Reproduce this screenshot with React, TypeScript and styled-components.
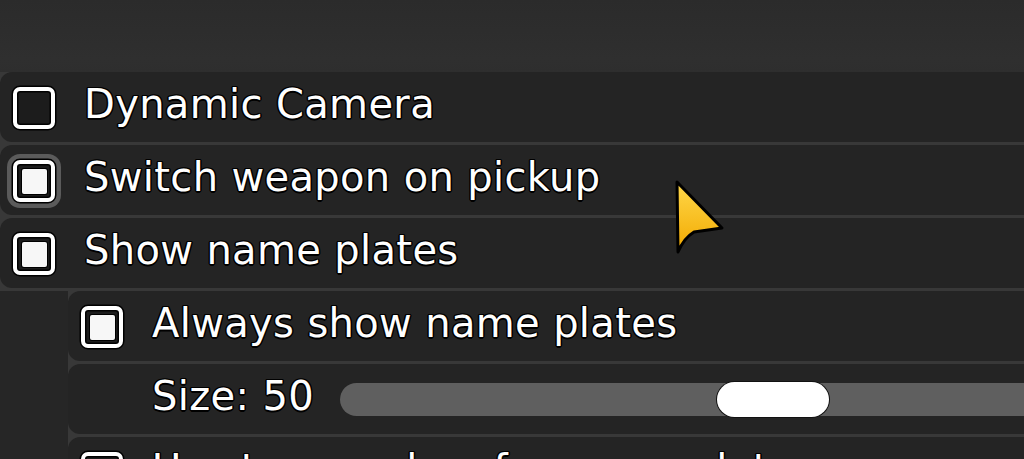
import React from "react";
import styled, { createGlobalStyle } from "styled-components";

const Global = createGlobalStyle`
  html, body {
    margin: 0;
    padding: 0;
    background: #2d2d2d;
    width: 1024px;
    height: 459px;
    overflow: hidden;
  }
  #root {
    width: 1024px;
    height: 459px;
    overflow: hidden;
    position: relative;
  }
`;

const Screen = styled.div`
  position: relative;
  width: 1024px;
  height: 459px;
  overflow: hidden;
  background: linear-gradient(180deg, #2b2b2b 0px, #2f2f2f 60px, #2e2e2e 72px);
  font-family: "DejaVu Sans", "Liberation Sans", sans-serif;
`;

const List = styled.div`
  margin-top: 72px;
  margin-right: -40px;
  display: flex;
  flex-direction: column;
  gap: 3px;
  background: #383838;
`;

const Row = styled.div`
  height: 70px;
  display: flex;
  align-items: center;
  background: #242424;
  border-radius: 12px 0 0 12px;
  padding-left: 13px;
  box-sizing: border-box;
`;

const Nested = styled.div`
  display: grid;
  grid-template-columns: 68px 1fr;
`;

const Gutter = styled.div`
  background: #262626;
`;

const NestedRows = styled.div`
  display: flex;
  flex-direction: column;
  gap: 3px;
`;

const Box = styled.span<{ $checked?: boolean; $focus?: boolean }>`
  position: relative;
  flex: none;
  width: 42px;
  height: 42px;
  box-sizing: border-box;
  border: 4px solid #ffffff;
  border-radius: 7px;
  background: #1c1c1c;
  box-shadow: 0 0 0 1.5px #000, inset 0 0 0 1.5px #000
    ${(p) => (p.$focus ? ", 0 0 0 6px rgba(110,110,110,0.75)" : "")};
  display: flex;
  align-items: center;
  justify-content: center;
  margin-top: 2px;

  &::after {
    content: "";
    display: ${(p) => (p.$checked ? "block" : "none")};
    width: 25px;
    height: 25px;
    background: #f7f7f7;
    border-radius: 2px;
    box-shadow: 0 0 0 1px #000;
  }
`;

const Label = styled.span`
  margin-left: 29px;
  padding-bottom: 7px;
  font-size: 40px;
  letter-spacing: 0.35px;
  color: #ffffff;
  white-space: nowrap;
  text-shadow: -1.5px 0 0 #000, 1.5px 0 0 #000, 0 -1.5px 0 #000, 0 1.5px 0 #000,
    -1px -1px 0 #000, 1px -1px 0 #000, -1px 1px 0 #000, 1px 1px 0 #000;
`;

const SliderLabel = styled(Label)`
  margin-left: 71px;
`;

const Track = styled.div`
  position: relative;
  flex: 1;
  height: 33px;
  margin-left: 26px;
  border-radius: 17px 0 0 17px;
  background: #5f5f5f;
`;

const Knob = styled.div`
  position: absolute;
  top: -1px;
  width: 112px;
  height: 35px;
  border-radius: 18px;
  background: #ffffff;
  box-shadow: 0 0 0 1px #111;
`;

const Cursor = styled.svg`
  position: absolute;
  left: 670px;
  top: 176px;
  width: 60px;
  height: 82px;
`;

type CheckProps = { label: string; checked?: boolean; focus?: boolean };

const CheckRow = ({ label, checked, focus }: CheckProps) => (
  <Row>
    <Box $checked={checked} $focus={focus} />
    <Label>{label}</Label>
  </Row>
);

export default function App() {
  const sliderValue = 50;
  const knobLeft = 377 * (sliderValue / 50);
  return (
    <>
      <Global />
      <Screen>
        <List>
          <CheckRow label="Dynamic Camera" />
          <CheckRow label="Switch weapon on pickup" checked focus />
          <CheckRow label="Show name plates" checked />
          <Nested>
            <Gutter />
            <NestedRows>
              <CheckRow label="Always show name plates" checked />
              <Row>
                <SliderLabel>Size: 50</SliderLabel>
                <Track>
                  <Knob style={{ left: knobLeft }} />
                </Track>
              </Row>
              <CheckRow label="Use team colors for name plates" checked />
            </NestedRows>
          </Nested>
        </List>
        <Cursor viewBox="0 0 60 82">
          <defs>
            <linearGradient id="cg" x1="0" y1="0" x2="0" y2="1">
              <stop offset="0" stopColor="#ffd84a" />
              <stop offset="1" stopColor="#f2a900" />
            </linearGradient>
          </defs>
          <path
            d="M7 6 L52 52 L24 56 Q14 62 8 76 Z"
            fill="url(#cg)"
            stroke="#000"
            strokeWidth="3"
            strokeLinejoin="round"
          />
        </Cursor>
      </Screen>
    </>
  );
}
